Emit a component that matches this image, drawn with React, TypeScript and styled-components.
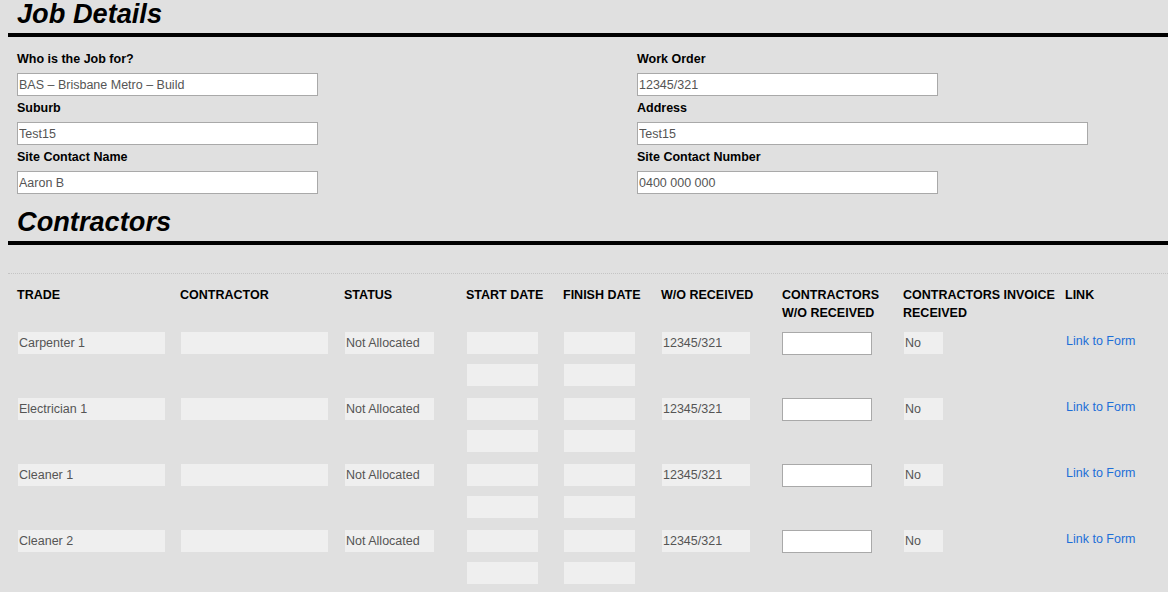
import styled, { createGlobalStyle } from "styled-components";

const GlobalStyle = createGlobalStyle`
  body {
    margin: 0;
    background: #e0e0e0;
    font-family: "Liberation Sans", Arial, sans-serif;
    font-size: 12.5px;
    color: #000;
  }
`;

const StyledPage = styled.div`
  padding-left: 8px;
  overflow: hidden;
`;

const StyledTitle = styled.h2<{ $spaced?: boolean }>`
  margin: ${(p) => (p.$spaced ? "14px" : "0")} 0 0;
  padding: 0 0 5px 9px;
  font-size: 27.2px;
  font-weight: 700;
  font-style: italic;
  line-height: 28px;
  border-bottom: 4px solid #000;
`;

const StyledFields = styled.div`
  display: grid;
  grid-template-columns: 620px 620px;
  row-gap: 4px;
  padding: 14px 0 0 9px;
`;

const StyledField = styled.div`
  display: flex;
  flex-direction: column;
  align-items: flex-start;
`;

const StyledLabel = styled.label`
  font-weight: 700;
  line-height: 16px;
  margin-bottom: 6px;
`;

const StyledInput = styled.input<{ $w?: number }>`
  box-sizing: border-box;
  width: ${(p) => p.$w ?? 301}px;
  height: 23px;
  margin: 0;
  padding: 0 1px;
  border: 1px solid #a9a9a9;
  background: #fff;
  color: #555;
  font-family: inherit;
  font-size: 12.5px;
  outline: none;
`;

const StyledTable = styled.div`
  margin-top: 28px;
  border-top: 1px dotted #c4c4c4;
  padding-top: 12px;
  display: flex;
  flex-direction: column;
  gap: 12px;
`;

const StyledRow = styled.div<{ $head?: boolean }>`
  display: grid;
  grid-template-columns: 163px 164px 122px 97px 98px 121px 121px 162px 1fr;
  align-items: start;
  padding-left: ${(p) => (p.$head ? 9 : 10)}px;
  margin-bottom: ${(p) => (p.$head ? "-2px" : "0")};
`;

const StyledHead = styled.div`
  font-weight: 700;
  line-height: 18px;
  text-transform: uppercase;
  white-space: nowrap;
`;

const StyledBox = styled.div<{ $w: number }>`
  box-sizing: border-box;
  width: ${(p) => p.$w}px;
  height: 22px;
  line-height: 22px;
  padding: 0 1px;
  background: #efefef;
  color: #555;
  white-space: nowrap;
  overflow: hidden;
`;

const StyledStack = styled.div`
  display: flex;
  flex-direction: column;
  gap: 10px;
`;

const StyledCellInput = styled(StyledInput)`
  margin-left: -1px;
`;

const StyledLink = styled.a`
  color: #1d6fd8;
  text-decoration: none;
  line-height: 19px;
  cursor: pointer;
`;

const fields = [
  { label: "Who is the Job for?", value: "BAS – Brisbane Metro – Build" },
  { label: "Work Order", value: "12345/321" },
  { label: "Suburb", value: "Test15" },
  { label: "Address", value: "Test15", wide: true },
  { label: "Site Contact Name", value: "Aaron B" },
  { label: "Site Contact Number", value: "0400 000 000" },
];

const headers = [
  "Trade",
  "Contractor",
  "Status",
  "Start Date",
  "Finish Date",
  "W/O Received",
  "Contractors\nW/O Received",
  "Contractors Invoice\nReceived",
  "Link",
];

const trades = ["Carpenter 1", "Electrician 1", "Cleaner 1", "Cleaner 2"];

function App() {
  return (
    <StyledPage>
      <GlobalStyle />
      <StyledTitle>Job Details</StyledTitle>
      <StyledFields>
        {fields.map((f) => (
          <StyledField key={f.label}>
            <StyledLabel>{f.label}</StyledLabel>
            <StyledInput readOnly defaultValue={f.value} $w={f.wide ? 451 : 301} />
          </StyledField>
        ))}
      </StyledFields>

      <StyledTitle $spaced>Contractors</StyledTitle>
      <StyledTable>
        <StyledRow $head>
          {headers.map((h) => (
            <StyledHead key={h}>
              {h.split("\n").map((line, i) => (
                <div key={i}>{line}</div>
              ))}
            </StyledHead>
          ))}
        </StyledRow>
        {trades.map((t) => (
          <StyledRow key={t}>
            <StyledBox $w={147}>{t}</StyledBox>
            <StyledBox $w={147} />
            <StyledBox $w={89}>Not Allocated</StyledBox>
            <StyledStack>
              <StyledBox $w={71} />
              <StyledBox $w={71} />
            </StyledStack>
            <StyledStack>
              <StyledBox $w={71} />
              <StyledBox $w={71} />
            </StyledStack>
            <StyledBox $w={88}>12345/321</StyledBox>
            <StyledCellInput $w={90} />
            <StyledBox $w={39}>No</StyledBox>
            <StyledLink>Link to Form</StyledLink>
          </StyledRow>
        ))}
      </StyledTable>
    </StyledPage>
  );
}

export default App;
